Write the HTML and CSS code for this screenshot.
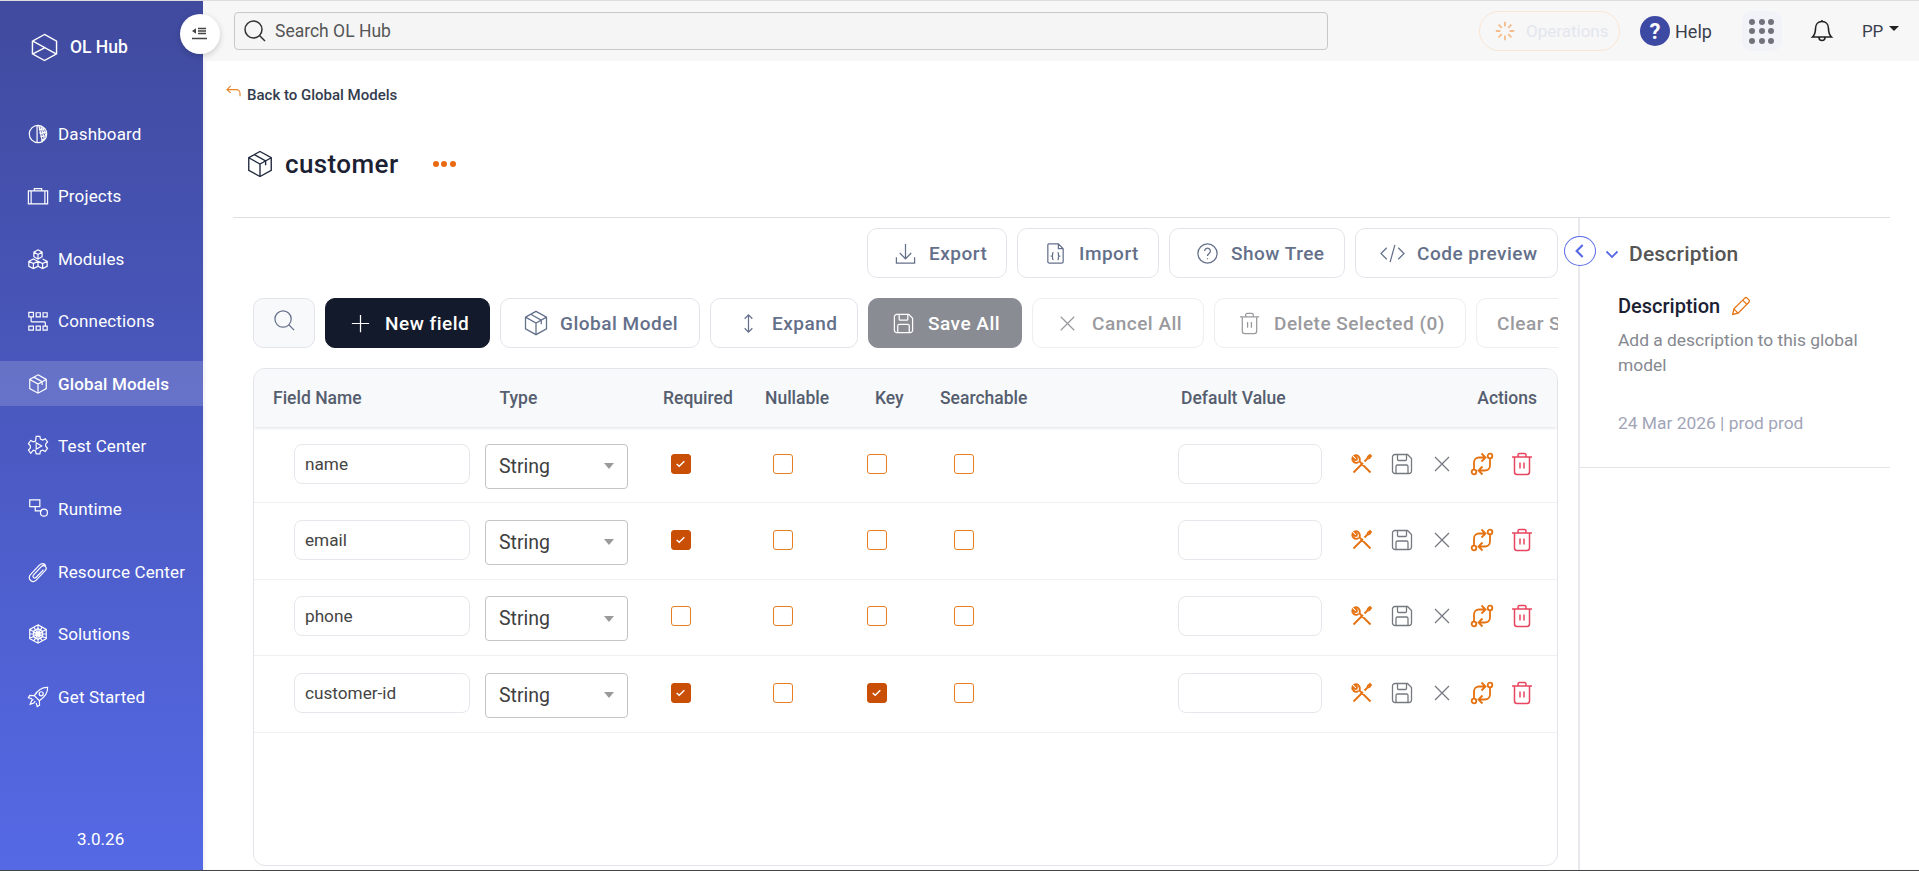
FILE: index.html
```html
<!DOCTYPE html>
<html lang="en">
<head>
<meta charset="utf-8">
<title>OL Hub</title>
<link rel="stylesheet" href="styles.css">
</head>
<body>
<svg class="defs" width="0" height="0" aria-hidden="true">
  <symbol id="cube" viewBox="0 0 24 24"><path d="M12 2l9 5v10l-9 5-9-5V7z M3 7l9 5 9-5 M12 12v10 M7.5 4.5l9 5v3.5"/></symbol>
  <symbol id="tools" viewBox="0 0 24 24"><path d="M3.500 20.500L13 11 M14.500 9.500l2.500-2.500 1-2.500 2-1.500 1 1-1.500 2-2.500 1-2.500 2.500z M20.500 20.500l-11-11c.8-2.200.2-4-1-5.200-1.200-1-2.800-1.300-4-.8l2.500 2.500-.3 1.700-1.700.3-2.500-2.500c-.5 1.200-.2 2.800.8 4 1.200 1.200 3.500 1.800 5.200.6"/></symbol>
  <symbol id="save" viewBox="0 0 24 24"><path d="M5 2.500h12.500l4 4V19a2.500 2.500 0 0 1-2.500 2.500H5A2.500 2.500 0 0 1 2.500 19V5A2.500 2.500 0 0 1 5 2.500z M7.500 2.500v5a1 1 0 0 0 1 1h7a1 1 0 0 0 1-1v-5 M6 21.500v-7a1.500 1.500 0 0 1 1.500-1.500h9a1.500 1.500 0 0 1 1.500 1.500v7"/></symbol>
  <symbol id="close" viewBox="0 0 24 24"><path d="M5 5l14 14 M19 5L5 19"/></symbol>
  <symbol id="swap" viewBox="0 0 24 24"><circle cx="4" cy="20" r="2.300"/><circle cx="20" cy="4" r="2.300"/><path d="M4 17.500v-7A5 5 0 0 1 9 5.500h6 M11.500 1.500l4 4-4 4 M20 6.500v7a5 5 0 0 1-5 5H9 M12.500 14.500l-4 4 4 4"/></symbol>
  <symbol id="trash" viewBox="0 0 24 24"><path d="M2 5h20 M8 5V3a1.500 1.500 0 0 1 1.500-1.500h5A1.500 1.500 0 0 1 16 3v2 M4.500 5v15a2.500 2.500 0 0 0 2.500 2.500h10a2.500 2.500 0 0 0 2.500-2.500V5 M10 10.500v6 M14 10.500v6"/></symbol>
  <symbol id="check" viewBox="0 0 20 20"><path d="M5.500 10.500l3 2.800 6-6"/></symbol>
</svg>
<div class="app">
  <aside class="sidebar">
    <div class="brand">
      <svg class="brand-logo" viewBox="0 0 28 30"><path d="M14 1.500l12.500 7v13L14 28.500 1.500 21.500v-13z M2 8.500l24 13 M2 21.500L15 14.800"/></svg>
      <span class="brand-name">OL Hub</span>
    </div>
    <nav class="nav">
      <a class="nav-item"><svg class="nav-icon" viewBox="0 0 24 24"><circle cx="12" cy="12" r="9.500"/><path d="M11 2.500v19 M13 3l4 18 M15 3l4 15 M17 4.500l3.500 9 M13 7l7-1 M13.500 11l8-1 M14.500 15l6.500-1 M15.500 19l3-1"/></svg><span>Dashboard</span></a>
      <a class="nav-item"><svg class="nav-icon" viewBox="0 0 24 24"><path d="M1.500 6.500h21v14h-21z M4.500 6.500v14 M19.500 6.500v14 M8 6.500V4h8v2.500"/></svg><span>Projects</span></a>
      <a class="nav-item"><svg class="nav-icon" viewBox="0 0 24 24"><path d="M12 2l4.500 2.500v5L12 12 7.500 9.500v-5z M7.500 4.500L12 7l4.500-2.500 M12 7v5 M7 12l5 2.500v5.500l-5 2.500L2 20v-5.500z M2 14.500L7 17l5-2.500 M7 17v5.500 M17 12l5 2.500V20l-5 2.500L12 20 M12 14.500l5 2.500 5-2.500 M17 17v5.500"/></svg><span>Modules</span></a>
      <a class="nav-item"><svg class="nav-icon" viewBox="0 0 24 24"><path d="M2 2.500h5v5H2z M10 3h4.500v4.500H10z M17.500 3H22v4.500h-4.500z M2 17.500h5V22H2z M10 17.500h4.500V22H10z M17.500 17.500H22V22h-4.500z M4.500 7.500V12a1 1 0 0 0 1 1H19a1 1 0 0 1 1 1v3.500"/></svg><span>Connections</span></a>
      <a class="nav-item active"><svg class="nav-icon" viewBox="0 0 24 24"><use href="#cube"/></svg><span>Global Models</span></a>
      <a class="nav-item"><svg class="nav-icon" viewBox="0 0 24 24"><path d="M10 1.500h4l.7 3 2.500 1 2.700-1.500 2.500 3.500-2 2.200v2.600l2 2.200-2.500 3.500-2.700-1.500-2.500 1-.7 3h-4l-.7-3-2.500-1L4.100 20l-2.500-3.500 2-2.200v-2.600l-2-2.200L4.100 6l2.700 1.500 2.500-1z M10 8.500l6 3.500-6 3.500z"/></svg><span>Test Center</span></a>
      <a class="nav-item"><svg class="nav-icon" viewBox="0 0 24 24"><path d="M3 2h11v7.500H3z M9 9.500v4.500h7"/><circle cx="18.500" cy="16" r="3.800"/></svg><span>Runtime</span></a>
      <a class="nav-item"><svg class="nav-icon" viewBox="0 0 24 24"><path d="M20.500 5c-2-3-5-2.500-7-.5L4 14.500c-2.500 2.700-1.500 5.500 0 6.800 1.800 1.500 4.300 1.200 6-.5l10-10.500c1.500-1.800 1-3.500 0-4.500-1.300-1.200-3-1-4.300.3l-8.500 9c-1 1.200-.7 2.300 0 3s1.800.6 2.800-.4l8-8.200"/></svg><span>Resource Center</span></a>
      <a class="nav-item"><svg class="nav-icon" viewBox="0 0 24 24"><path d="M12 2l9 5v10l-9 5-9-5V7z M3 7l18 10 M21 7L3 17 M12 2v20 M7.500 4.500l9 15 M16.500 4.500l-9 15 M3 12h18 M12 6l5 3v6l-5 3-5-3V9z"/></svg><span>Solutions</span></a>
      <a class="nav-item"><svg class="nav-icon" viewBox="0 0 24 24"><path d="M22.500 1.500c-6-.3-10.500 2.500-14.500 9l5.500 5.500c6-4 9.300-8.500 9-14.500z M8 10.500l-5-.2-1.500 2.500 4 1.200 M13.500 16l.2 5-2.500 1.500-1.200-4 M7 14.500l-2 1.500-1.500 4 4-1.500 1.500-2"/><circle cx="15.500" cy="8.500" r="2.200"/></svg><span>Get Started</span></a>
    </nav>
    <div class="version">3.0.26</div>
  </aside>
  <main class="main">
    <button class="collapse" type="button" aria-label="Collapse sidebar"><svg viewBox="0 0 16 14"><path class="fill" d="M0 4l4-2.800v5.600z"/><path d="M6 1.500h8 M6 4h8 M6 6.500h8 M0 11.500h15"/></svg></button>
    <header class="topbar">
      <div class="search">
        <svg class="search-icon" viewBox="0 0 24 24"><circle cx="10.500" cy="10.500" r="8.500"/><path d="M16.500 16.500L22 22"/></svg>
        <span>Search OL Hub</span>
      </div>
      <div class="ops">
        <svg viewBox="0 0 24 24"><path d="M12 2v5 M12 17v5 M2 12h5 M17 12h5 M5 5l3.500 3.500 M15.500 15.500L19 19 M5 19l3.500-3.500 M15.500 8.500L19 5"/></svg>
        <span>Operations</span>
      </div>
      <div class="help"><span class="help-badge">?</span><span>Help</span></div>
      <div class="apps"><i></i><i></i><i></i><i></i><i></i><i></i><i></i><i></i><i></i></div>
      <svg class="bell" viewBox="0 0 24 24"><path d="M12 2.500c-4 0-6.500 3-6.500 7 0 5-1.500 7-3 8.500h19c-1.500-1.500-3-3.500-3-8.500 0-4-2.500-7-6.500-7z M9 18.500a3 3 0 0 0 6 0 M12 1v1.500"/></svg>
      <div class="user">PP<span class="user-caret"></span></div>
    </header>
    <div class="page">
      <a class="back"><svg viewBox="0 0 16 14"><path d="M5 1L1 5l4 3.500 M1 5h10a4 4 0 0 1 4 4v3"/></svg><span>Back to Global Models</span></a>
      <div class="title-row">
        <svg class="title-icon" viewBox="0 0 24 24"><use href="#cube"/></svg>
        <h1>customer</h1>
        <div class="dots"><i></i><i></i><i></i></div>
      </div>
      <div class="split">
        <section class="left">
          <div class="toolbar toolbar-top">
            <button class="btn btn-export" type="button"><svg viewBox="0 0 24 24"><path d="M12 2v15 M6 11.500l6 6 6-6 M2.500 16v6h19v-6"/></svg>Export</button>
            <button class="btn btn-import" type="button"><svg viewBox="0 0 24 24"><path d="M5 2h10l5 5v13.500a1.500 1.500 0 0 1-1.500 1.500h-13A1.500 1.500 0 0 1 4 20.500V3a1 1 0 0 1 1-1z M15 2v5h5 M10 11c-1.500 0-1 1.500-1 2.500s-.5 1-1 1.200c.5.200 1 .3 1 1.300s-.5 2.500 1 2.500 M14 11c1.500 0 1 1.500 1 2.500s.5 1 1 1.200c-.5.200-1 .3-1 1.300s.5 2.500-1 2.500"/></svg>Import</button>
            <button class="btn btn-tree" type="button"><svg viewBox="0 0 24 24"><circle cx="12" cy="12" r="10"/><path d="M9 9.500a3 3 0 1 1 4.500 2.600c-1 .6-1.500 1.200-1.500 2.400 M12 17v1"/></svg>Show Tree</button>
            <button class="btn btn-code" type="button"><svg class="wide" viewBox="0 0 26 24"><path d="M7 6l-6 6 6 6 M19 6l6 6-6 6 M15.500 3l-5 18"/></svg>Code preview</button>
          </div>
          <div class="toolbar">
            <button class="btn btn-search" type="button" aria-label="Search"><svg viewBox="0 0 24 24"><circle cx="10.500" cy="10.500" r="8.500"/><path d="M16.500 16.500L22 22"/></svg></button>
            <button class="btn btn-dark" type="button"><svg viewBox="0 0 24 24"><path d="M12 3v18 M3 12h18"/></svg>New field</button>
            <button class="btn btn-cube" type="button"><svg viewBox="0 0 24 24"><use href="#cube"/></svg>Global Model</button>
            <button class="btn btn-expand" type="button"><svg viewBox="0 0 24 24"><path d="M12 3v18 M8 7l4-4 4 4 M8 17l4 4 4-4"/></svg>Expand</button>
            <button class="btn btn-save" type="button"><svg viewBox="0 0 24 24"><use href="#save"/></svg>Save All</button>
            <button class="btn btn-off btn-cancel" type="button"><svg viewBox="0 0 24 24"><use href="#close"/></svg>Cancel All</button>
            <button class="btn btn-off btn-delete" type="button"><svg viewBox="0 0 24 24"><use href="#trash"/></svg>Delete Selected (0)</button>
            <button class="btn btn-off btn-clear" type="button">Clear Selection</button>
          </div>
          <div class="table">
            <div class="thead">
              <span>Field Name</span><span>Type</span><span>Required</span><span>Nullable</span><span>Key</span><span>Searchable</span><span>Default Value</span><span>Actions</span>
            </div>
            <div class="row">
              <input class="field" value="name" aria-label="Field name">
              <div class="select">String<i></i></div>
              <span class="cb on"><svg viewBox="0 0 20 20"><use href="#check"/></svg></span>
              <span class="cb"></span><span class="cb"></span><span class="cb"></span>
              <input class="default" aria-label="Default value">
              <div class="actions">
                <svg class="a-orange" viewBox="0 0 24 24"><use href="#tools"/></svg>
                <svg class="a-grey" viewBox="0 0 24 24"><use href="#save"/></svg>
                <svg class="a-grey" viewBox="0 0 24 24"><use href="#close"/></svg>
                <svg class="a-orange" viewBox="0 0 24 24"><use href="#swap"/></svg>
                <svg class="a-red" viewBox="0 0 24 24"><use href="#trash"/></svg>
              </div>
            </div>
            <div class="row">
              <input class="field" value="email" aria-label="Field name">
              <div class="select">String<i></i></div>
              <span class="cb on"><svg viewBox="0 0 20 20"><use href="#check"/></svg></span>
              <span class="cb"></span><span class="cb"></span><span class="cb"></span>
              <input class="default" aria-label="Default value">
              <div class="actions">
                <svg class="a-orange" viewBox="0 0 24 24"><use href="#tools"/></svg>
                <svg class="a-grey" viewBox="0 0 24 24"><use href="#save"/></svg>
                <svg class="a-grey" viewBox="0 0 24 24"><use href="#close"/></svg>
                <svg class="a-orange" viewBox="0 0 24 24"><use href="#swap"/></svg>
                <svg class="a-red" viewBox="0 0 24 24"><use href="#trash"/></svg>
              </div>
            </div>
            <div class="row">
              <input class="field" value="phone" aria-label="Field name">
              <div class="select">String<i></i></div>
              <span class="cb"></span>
              <span class="cb"></span><span class="cb"></span><span class="cb"></span>
              <input class="default" aria-label="Default value">
              <div class="actions">
                <svg class="a-orange" viewBox="0 0 24 24"><use href="#tools"/></svg>
                <svg class="a-grey" viewBox="0 0 24 24"><use href="#save"/></svg>
                <svg class="a-grey" viewBox="0 0 24 24"><use href="#close"/></svg>
                <svg class="a-orange" viewBox="0 0 24 24"><use href="#swap"/></svg>
                <svg class="a-red" viewBox="0 0 24 24"><use href="#trash"/></svg>
              </div>
            </div>
            <div class="row">
              <input class="field" value="customer-id" aria-label="Field name">
              <div class="select">String<i></i></div>
              <span class="cb on"><svg viewBox="0 0 20 20"><use href="#check"/></svg></span>
              <span class="cb"></span>
              <span class="cb on"><svg viewBox="0 0 20 20"><use href="#check"/></svg></span>
              <span class="cb"></span>
              <input class="default" aria-label="Default value">
              <div class="actions">
                <svg class="a-orange" viewBox="0 0 24 24"><use href="#tools"/></svg>
                <svg class="a-grey" viewBox="0 0 24 24"><use href="#save"/></svg>
                <svg class="a-grey" viewBox="0 0 24 24"><use href="#close"/></svg>
                <svg class="a-orange" viewBox="0 0 24 24"><use href="#swap"/></svg>
                <svg class="a-red" viewBox="0 0 24 24"><use href="#trash"/></svg>
              </div>
            </div>
          </div>
        </section>
        <aside class="panel">
          <button class="panel-toggle" type="button" aria-label="Collapse panel"><svg viewBox="0 0 12 12"><path d="M8 1.500L3.500 6 8 10.500"/></svg></button>
          <div class="panel-body">
            <div class="panel-head"><svg viewBox="0 0 14 10"><path d="M1.500 2.500L7 8l5.500-5.500"/></svg><span>Description</span></div>
            <div class="panel-content">
              <div class="desc-title"><span>Description</span><svg viewBox="0 0 24 24"><path d="M2 22l1.500-6.500L16.500 2.500a2 2 0 0 1 2.800 0l2.200 2.200a2 2 0 0 1 0 2.800L8.500 20.500z M14 5l5 5 M3.500 15.500l5 5"/></svg></div>
              <p class="desc-text">Add a description to this global model</p>
              <p class="desc-meta">24 Mar 2026 | prod prod</p>
            </div>
          </div>
        </aside>
      </div>
    </div>
  </main>
</div>
</body>
</html>
```

FILE: styles.css
```css
* { box-sizing: border-box; }
html, body { margin: 0; height: 100%; overflow: hidden; }
body { font-family: Roboto, "Liberation Sans", sans-serif; color: #222; background: #fff; }
.defs { position: absolute; }
svg { fill: none; stroke: currentColor; stroke-width: 1.6; flex: none; }
button { font: inherit; }

.app { display: flex; height: 871px; border-top: 1px solid #ddd; border-bottom: 1px solid #444; }

/* sidebar */
.sidebar { width: 203px; flex: none; display: flex; flex-direction: column; background: linear-gradient(180deg, #404a9e 0%, #5569e5 100%); color: #fff; }
.brand { height: 110px; flex: none; display: flex; align-items: flex-start; padding: 32px 0 0 31px; gap: 12px; }
.brand-logo { width: 27px; height: 29px; stroke-width: 1.5; }
.brand-name { font-size: 17.500px; font-weight: 500; line-height: 28px; }
.nav { display: flex; flex-direction: column; gap: 17.600px; }
.nav-item { height: 45px; display: flex; align-items: center; padding-left: 27px; gap: 9px; font-size: 17px; letter-spacing: .15px; }
.nav-item.active { background: rgba(255, 255, 255, .16); font-weight: 500; }
.nav-icon { width: 22px; height: 22px; stroke-width: 1.300; }
.version { margin-top: auto; padding: 0 0 21px 77px; font-size: 17px; line-height: 19px; }

/* main */
.main { flex: 1; min-width: 0; display: flex; flex-direction: column; position: relative; box-shadow: inset 4px 0 4px -3px rgba(0, 0, 0, .08); }
.collapse { position: absolute; left: -23px; top: 13px; width: 40px; height: 40px; border: 0; border-radius: 50%; background: #fff; box-shadow: 0 2px 6px rgba(0, 0, 0, .18); display: flex; align-items: center; justify-content: center; padding: 0; color: #444; z-index: 2; }
.collapse svg { width: 16px; height: 14px; stroke-width: 1.300; }
.collapse .fill { fill: currentColor; stroke: none; }

.topbar { height: 60px; flex: none; display: flex; align-items: center; background: #f7f7f8; padding-left: 31px; }
.search { width: 1094px; height: 38px; display: flex; align-items: center; gap: 8px; padding-left: 8px; background: #f5f5f5; border: 1px solid #c8c8c8; border-radius: 4px; font-size: 17.500px; color: #555; }
.search-icon { width: 24px; height: 24px; color: #333; stroke-width: 1.500; }
.ops { margin-left: 151px; width: 141px; height: 40px; display: flex; align-items: center; gap: 10px; padding-left: 14px; border: 1px solid #fae6d4; border-radius: 20px; font-size: 17px; color: #e4e6ee; }
.ops svg { width: 22px; height: 22px; color: #f5bd8c; stroke-width: 2; }
.help { margin-left: 20px; display: flex; align-items: center; gap: 5px; font-size: 18px; color: #3a3f4c; }
.help-badge { width: 30px; height: 30px; border-radius: 50%; background: #3d4aa3; color: #fff; font-size: 22px; font-weight: 700; display: flex; align-items: center; justify-content: center; }
.apps { margin-left: 30px; width: 40px; height: 40px; border-radius: 10px; background: #f2f3f9; display: grid; grid-template-columns: repeat(3, 6px); grid-auto-rows: 6px; gap: 3.500px; place-content: center; }
.apps i { width: 6px; height: 6px; border-radius: 50%; background: #70737c; }
.bell { margin-left: 28px; width: 24px; height: 24px; color: #222; }
.user { margin-left: 28px; font-size: 17px; color: #3a3f4c; display: flex; align-items: flex-start; gap: 6px; }
.user-caret { width: 0; height: 0; margin-top: 5px; border: 5.500px solid transparent; border-top-color: #222; border-bottom: 0; }

.page { flex: 1; min-height: 0; display: flex; flex-direction: column; }
.back { height: 67px; flex: none; display: flex; align-items: center; padding: 0 0 0 23px; gap: 6px; font-size: 15px; font-weight: 500; color: #333c4e; }
.back svg { width: 15px; height: 13px; color: #e8832a; stroke-width: 1.200; margin-top: -7px; }
.title-row { height: 90px; flex: none; margin: 0 29px 0 30px; padding-left: 12px; display: flex; align-items: center; border-bottom: 1px solid #dfdfe3; padding-bottom: 18px; }
.title-icon { width: 30px; height: 30px; color: #222b3e; stroke-width: 1.100; }
h1 { margin: 0 0 0 10px; font-size: 26px; font-weight: 500; letter-spacing: .4px; color: #1b2133; }
.dots { margin-left: 34px; display: flex; gap: 2.500px; }
.dots i { width: 6px; height: 6px; border-radius: 50%; background: #e96a10; }

.split { flex: 1; min-height: 0; display: flex; padding-right: 29px; }
.left { width: 1375px; flex: none; padding: 10px 20px 4px 50px; display: flex; flex-direction: column; gap: 20px; }
.toolbar { display: flex; gap: 10px; overflow: hidden; flex: none; }
.toolbar-top { justify-content: flex-end; }
.btn { height: 50px; flex: none; display: flex; align-items: center; gap: 12px; padding: 0 0 0 26px; background: #fff; border: 1px solid #e3e4ea; border-radius: 10px; font-size: 19px; letter-spacing: .5px; font-weight: 500; color: #64708a; white-space: nowrap; }
.btn svg { width: 23px; height: 23px; stroke-width: 1.300; }
.btn svg.wide { width: 25px; }
.btn-export { width: 140px; }
.btn-import { width: 142px; }
.btn-tree { width: 176px; }
.btn-code { width: 203px; padding-left: 24px; }
.btn-search { width: 62px; padding: 0; justify-content: center; background: #f8f9fb; }
.btn-search svg { margin-top: -6px; }
.btn-dark { width: 165px; background: #131a2b; border-color: #131a2b; color: #fff; padding-left: 23px; gap: 13px; }
.btn-cube { width: 200px; padding-left: 21px; gap: 10px; }
.btn-cube svg { width: 28px; height: 28px; stroke-width: 1.100; }
.btn-expand { width: 148px; }
.btn-save { width: 154px; background: #8a8c94; border-color: #8a8c94; color: #fff; padding-left: 23px; gap: 13px; }
.btn-off { color: #9a9a9e; border-color: #eeeef1; padding-left: 23px; gap: 13px; }
.btn-cancel { width: 172px; }
.btn-delete { width: 252px; }
.btn-clear { padding: 0 20px; }

.table { flex: 1; min-height: 0; border: 1px solid #e3e4ea; border-radius: 12px; overflow: hidden; }
.thead { height: 58px; display: grid; grid-template-columns: 226.500px 163.500px 102px 110px 65px 241px 1fr auto; padding: 0 20px 0 19px; align-items: center; background: #f8f9fb; font-size: 17.500px; font-weight: 500; color: #555e6e; box-shadow: 0 1px 3px rgba(0, 0, 0, .12); position: relative; }
.row { height: 76.400px; display: grid; grid-template-columns: 231px 173px 102px 94px 87px 224px 185px auto; padding-top: 16.500px; align-items: start; border-bottom: 1px solid #f0f0f2; }
.field { width: 176px; height: 40px; margin-left: 40px; padding: 0 10px; border: 1px solid #e6e7ec; border-radius: 8px; font: 400 17.200px Roboto, sans-serif; color: #444; outline: none; }
.select { width: 143px; height: 45px; padding: 0 0 0 13px; display: flex; align-items: center; justify-content: space-between; border: 1px solid #c4c4c8; border-radius: 4px; font-size: 19.500px; color: #404040; background: #fff; }
.select i { margin-right: 13px; width: 0; height: 0; border: 5.500px solid transparent; border-top: 6px solid #9a9a9a; border-bottom: 0; }
.cb { width: 20px; height: 20px; margin: 10px 0 0 13px; border: 1.300px solid #e67e22; border-radius: 3px; display: block; }
.cb.on { background: #c94f06; border-color: #c94f06; color: #fff; }
.cb svg { width: 17px; height: 17px; display: block; stroke-width: 1.600; }
.default { width: 144px; height: 40px; margin-left: 13px; border: 1px solid #e6e7ec; border-radius: 8px; outline: none; }
.actions { display: flex; gap: 16px; margin-top: 8px; }
.actions svg { width: 24px; height: 24px; }
.a-orange { color: #e5710f; stroke-width: 1.800; }
.a-grey { color: #76797f; stroke-width: 1.300; }
.a-red { color: #e8455f; stroke-width: 1.500; }

/* panel */
.panel { flex: 1; min-width: 0; position: relative; border-left: 2px solid #e8e8ee; }
.panel-toggle { position: absolute; left: -16px; top: 18px; width: 32px; height: 30px; padding: 0; border: 1px solid #5869e5; border-radius: 50%; background: #fff; color: #5869e5; display: flex; align-items: center; justify-content: center; }
.panel-toggle svg { width: 16px; height: 16px; stroke-width: 1.600; }
.panel-body { height: 250px; border-bottom: 1px solid #e3e3e8; }
.panel-head { display: flex; align-items: center; gap: 10px; padding: 23px 0 0 25px; font-size: 21px; letter-spacing: .2px; font-weight: 500; color: #555; line-height: 26px; }
.panel-head svg { width: 14px; height: 10px; color: #5869e5; stroke-width: 1.800; }
.panel-content { padding: 26px 24px 0 38px; }
.desc-title { display: flex; align-items: center; gap: 11px; font-size: 20px; font-weight: 500; color: #1b2133; line-height: 26px; }
.desc-title svg { width: 20px; height: 20px; color: #e5710f; stroke-width: 1.500; }
.desc-text { margin: 9px 0 0; font-size: 17.400px; line-height: 25px; color: #85888f; }
.desc-meta { margin: 32px 0 0; font-size: 17.400px; line-height: 26px; color: #a2a5b8; }
```
